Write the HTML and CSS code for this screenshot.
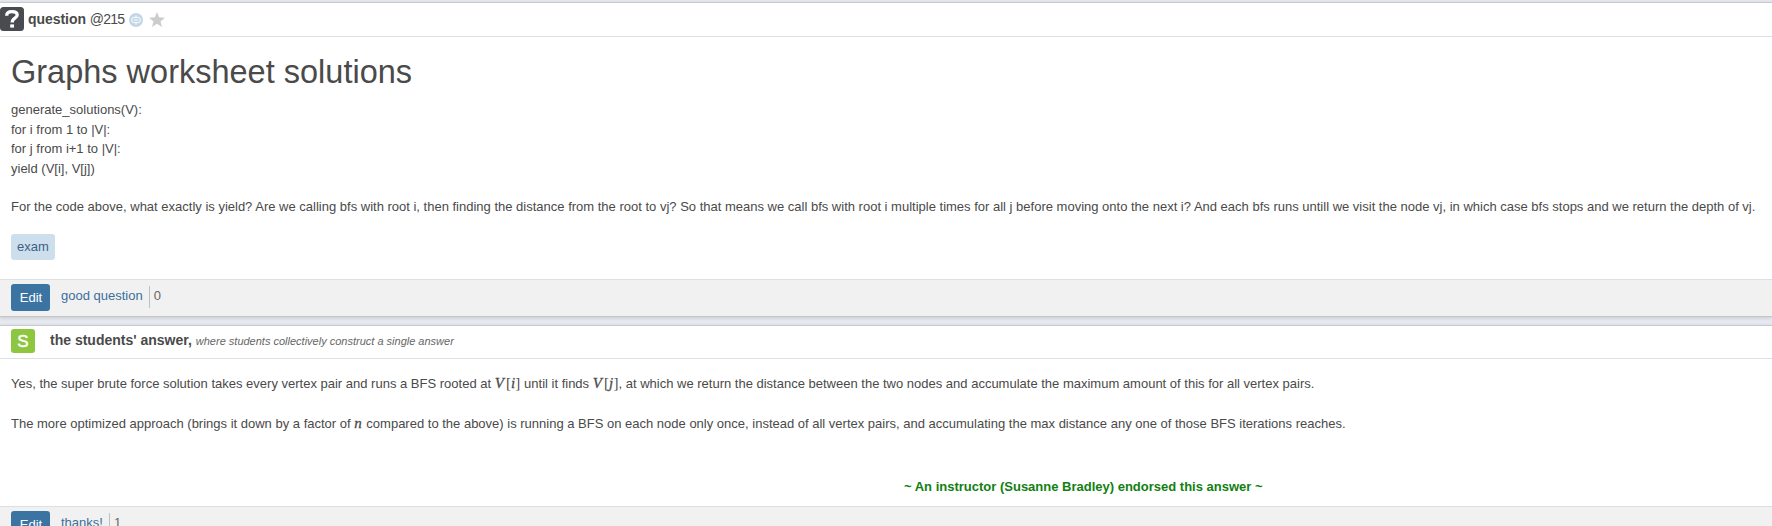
FILE: index.html
```
<!DOCTYPE html>
<html lang="en">
<head>
<meta charset="utf-8">
<title>Graphs worksheet solutions</title>
<link rel="stylesheet" href="styles.css">
</head>
<body>
<main class="page">
  <section class="post question">
    <header class="bar">
      <svg class="badge" viewBox="0 0 24 24"><rect width="24" height="24" rx="3.5" fill="#4a4b4f"/><path d="M6.7 8.700C6.700 5.600 8.700 4.700 12 4.700c3.300 0 5.200 1.100 5.200 3.300 0 3.600-5 2.800-5 7.400" fill="none" stroke="#fff" stroke-width="3.300"/><rect x="10.200" y="17.400" width="3.800" height="3.200" fill="#fff"/></svg>
      <span class="kind"><b>question</b> <span class="number">@215</span></span>
      <svg class="link" viewBox="0 0 14 14"><circle cx="7" cy="7" r="7" fill="#c3d6e5"/><path d="M5.200 4.400h3.600a2.600 2.600 0 0 1 0 5.200H5.200a2.600 2.600 0 0 1 0-5.200zM4.800 7h4.400M7 2.500v2M7 9.600v2" fill="none" stroke="#fff" stroke-width="1"/></svg>
      <svg class="star" viewBox="0 0 16 15"><path d="M8 0l2.100 5.300 5.900.4-4.500 3.700L13 15l-5-3.200L3 15l1.500-5.600L0 5.700l5.900-.4z" fill="#ccc"/></svg>
    </header>
    <div class="body">
      <h1 class="title"><span>Graphs worksheet solutions</span></h1>
      <p class="text"><span>generate_solutions(V):</span><br>for i from 1 to |V|:<br>for j from i+1 to |V|:<br>yield (V[i], V[j])</p>
      <p class="text details"><span>For the code above, what exactly is yield? Are we calling bfs with root i, then finding the distance from the root to vj? So that means we call bfs with root i multiple times for all j before moving onto the next i? And each bfs runs untill we visit the node vj, in which case bfs stops and we return the depth of vj.</span></p>
      <a class="tag">exam</a>
    </div>
    <footer class="actions"><button class="edit">Edit</button><a class="vote">good question</a><span class="count">0</span></footer>
  </section>
  <section class="post answer">
    <header class="bar answer-bar">
      <span class="s-badge">S</span>
      <span class="heading">the students' answer,</span>
      <i class="hint">where students collectively construct a single answer</i>
    </header>
    <div class="body">
      <p class="text first">Yes, the super brute force solution takes every vertex pair and runs a BFS rooted at <span class="math"><i class="cap">V</i>[<i>i</i>]</span> until it finds <span class="math"><i class="cap">V</i>[<i>j</i>]</span>, at which we return the distance between the two nodes and accumulate the maximum amount of this for all vertex pairs.</p>
      <p class="text second">The more optimized approach (brings it down by a factor of <span class="math n"><i>n</i></span> compared to the above) is running a BFS on each node only once, instead of all vertex pairs, and accumulating the max distance any one of those BFS iterations reaches.</p>
      <p class="endorsed">~ An instructor (Susanne Bradley) endorsed this answer ~</p>
    </div>
    <footer class="actions"><button class="edit">Edit</button><a class="vote">thanks!</a><span class="count">1</span></footer>
  </section>
</main>
</body>
</html>
```
FILE: styles.css
```
* { box-sizing: border-box; }
body {
  margin: 0;
  height: 526px;
  overflow: hidden;
  background: #e7eaf0;
  color: #4a4a4a;
  font: 13px/19.5px "Liberation Sans", Arial, sans-serif;
}
p, h1 { margin: 0; }
.page { padding-top: 2px; display: flex; flex-direction: column; gap: 8px; }
.post {
  flex: none;
  display: flex;
  flex-direction: column;
  background: #fff;
  border-top: 1px solid #c9cacd;
  border-bottom: 1px solid #c5c6c9;
  box-shadow: 0 1px 4px rgba(0, 0, 0, 0.15);
}
.question { height: 315px; }
.answer { height: 219px; }
.bar {
  flex: none;
  height: 34px;
  display: flex;
  align-items: center;
  border-bottom: 1px solid #dddfe6;
}
.badge { width: 24px; height: 24px; margin: 0 4px 1px 0; }
.kind { font-size: 14px; letter-spacing: -0.05px; }
.number { letter-spacing: -0.75px; }
.link { width: 14px; height: 14px; margin: 1px 6px 0 5px; }
.star { width: 16px; height: 15px; }
.body { flex: 1; padding: 0 11px; display: flex; flex-direction: column; align-items: flex-start; }
.title {
  margin: 15px 0 8px;
  font-size: 32.5px;
  line-height: 40px;
  font-weight: 400;
}
.text { white-space: nowrap; }
.details { margin-top: 19px; }
.tag {
  margin-top: 17.5px;
  height: 26px;
  width: 44px;
  text-align: center;
  line-height: 26px;
  border-radius: 3px;
  background: #cddfed;
  color: #3b6285;
}
.actions {
  flex: none;
  height: 37px;
  padding: 4px 11px 0;
  display: flex;
  align-items: flex-start;
  background: #f1f1f1;
  border-top: 1px solid #dddfe4;
}
.edit {
  width: 39px;
  height: 27px;
  padding: 0 0 1px 1px;
  border: 0;
  border-radius: 3px;
  background: #3b73a3;
  color: #fff;
  font: 13px "Liberation Sans", Arial, sans-serif;
}
.vote { margin: 2px 0 0 11px; padding-right: 6px; color: #3b6f9c; border-right: 1px solid #b4c2d4; height: 22px; line-height: 19px; }
.count { margin: 2px 0 0 4px; line-height: 19px; color: #666; }
.answer-bar { padding: 0 0 2px 11px; height: 33px; }
.s-badge {
  width: 24px;
  height: 24px;
  border-radius: 3px;
  background: #8dc63f;
  color: #fff;
  font-size: 17px;
  line-height: 25px;
  text-align: center;
  -webkit-text-stroke: 0.5px #fff;
}
.heading { margin-left: 15px; font-size: 14px; font-weight: 700; }
.hint { margin: 2px 0 0 4px; font-size: 11px; color: #666; }
.first { margin-top: 15px; height: 20px; }
.second { margin-top: 20px; height: 20px; }
.math { font: 15px/15px "Liberation Serif", serif; letter-spacing: 0.1px; }
.math i { -webkit-text-stroke: 0.3px #4a4a4a; }
.cap { margin-right: 2px; }
.n { letter-spacing: 1px; }
.endorsed {
  margin: 43px 0 0 893px;
  color: #118011;
  font-weight: 700;
  white-space: nowrap;
}
```
